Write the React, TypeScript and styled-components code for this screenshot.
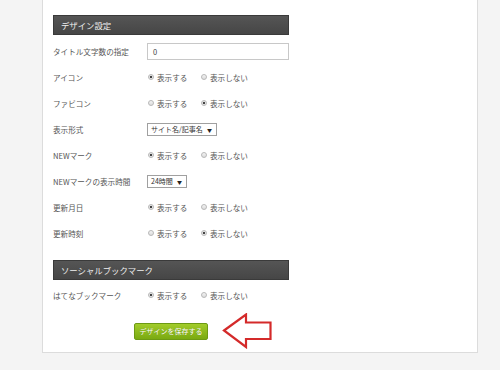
import React, { FC } from "react";
import styled, { createGlobalStyle } from "styled-components";

const GlobalStyle = createGlobalStyle`
  html, body {
    margin: 0;
    padding: 0;
    background: #f4f4f4;
    font-family: "Noto Sans CJK JP", "Liberation Sans", sans-serif;
  }
`;

const Page = styled.div`
  width: 500px;
  height: 370px;
  overflow: hidden;
  padding-left: 42px;
  box-sizing: border-box;
`;

const Panel = styled.div`
  width: 436px;
  box-sizing: border-box;
  background: #fff;
  border: 1px solid #dcdcdc;
  border-top: none;
  padding: 15px 0 3px 10px;
`;

const SectionHeader = styled.div<{ $top?: number }>`
  width: 236px;
  height: 20px;
  box-sizing: border-box;
  margin-top: ${(p) => p.$top ?? 0}px;
  background: linear-gradient(#555, #464646);
  border: 1px solid #3a3a3a;
  color: #f0f0f0;
  font-size: 8.4px;
  line-height: 18px;
  padding-left: 7px;
`;

const Rows = styled.div<{ $top?: number }>`
  margin-top: ${(p) => p.$top ?? 0}px;
  display: flex;
  flex-direction: column;
`;

const Row = styled.div`
  display: grid;
  grid-template-columns: 94px 1fr;
  align-items: center;
  height: 26px;
`;

const Label = styled.div`
  font-size: 7.6px;
  color: #555;
  white-space: nowrap;
`;

const TextInput = styled.div`
  width: 142px;
  height: 17px;
  box-sizing: border-box;
  border: 1px solid #c8c8c8;
  font-size: 7.5px;
  color: #444;
  line-height: 15px;
  padding-left: 5px;
`;

const RadioGroup = styled.div`
  display: flex;
  align-items: center;
  padding-left: 1px;
`;

const RadioItem = styled.div`
  display: flex;
  align-items: center;
  gap: 3px;
  width: 53px;
  font-size: 7.6px;
  color: #555;
  white-space: nowrap;
`;

const RadioDot = styled.span<{ $on: boolean }>`
  width: 6px;
  height: 6px;
  border-radius: 50%;
  box-sizing: border-box;
  border: 1px solid #b8b8b8;
  background: ${(p) =>
    p.$on
      ? "radial-gradient(circle, #444 0 1.3px, #eee 1.6px)"
      : "linear-gradient(#f4f4f4, #dcdcdc)"};
`;

const SelectBox = styled.div<{ $w: number }>`
  width: ${(p) => p.$w}px;
  height: 13px;
  box-sizing: border-box;
  border: 1px solid #a0a0a0;
  display: flex;
  align-items: center;
  justify-content: space-between;
  padding: 0 4px 0 3px;
  font-size: 7px;
  color: #333;
  white-space: nowrap;
`;

const Caret = styled.span`
  font-size: 5px;
  color: #222;
`;

const SaveRow = styled.div`
  display: flex;
  align-items: center;
  gap: 14px;
  padding-left: 81px;
  margin-top: 5px;
`;

const SaveButton = styled.button`
  width: 74px;
  height: 17px;
  border: 1px solid #6d9a14;
  border-radius: 2px;
  background: linear-gradient(#a2cc2a, #7aaa12);
  color: #fff;
  font-family: inherit;
  font-size: 7px;
  padding: 0;
  text-shadow: 0 0 1px rgba(0, 0, 0, 0.25);
`;

const Radio: FC<{ on: boolean }> = ({ on }) => (
  <RadioGroup>
    <RadioItem>
      <RadioDot $on={on} />
      表示する
    </RadioItem>
    <RadioItem>
      <RadioDot $on={!on} />
      表示しない
    </RadioItem>
  </RadioGroup>
);

const Arrow: FC = () => (
  <svg width="52" height="36" viewBox="0 0 52 36">
    <path
      d="M2 17.5 L24 1.5 L24 9.5 L48.5 9.5 L48.5 26 L24 26 L24 34 Z"
      fill="none"
      stroke="#d42a2a"
      strokeWidth="2.2"
      strokeLinejoin="miter"
    />
  </svg>
);

const App: FC = () => {
  return (
    <Page>
      <GlobalStyle />
      <Panel>
        <SectionHeader>デザイン設定</SectionHeader>
        <Rows $top={3}>
          <Row>
            <Label>タイトル文字数の指定</Label>
            <TextInput>0</TextInput>
          </Row>
          <Row>
            <Label>アイコン</Label>
            <Radio on={true} />
          </Row>
          <Row>
            <Label>ファビコン</Label>
            <Radio on={false} />
          </Row>
          <Row>
            <Label>表示形式</Label>
            <SelectBox $w={70}>
              サイト名/記事名 <Caret>▼</Caret>
            </SelectBox>
          </Row>
          <Row>
            <Label>NEWマーク</Label>
            <Radio on={true} />
          </Row>
          <Row>
            <Label>NEWマークの表示時間</Label>
            <SelectBox $w={40}>
              24時間 <Caret>▼</Caret>
            </SelectBox>
          </Row>
          <Row>
            <Label>更新月日</Label>
            <Radio on={true} />
          </Row>
          <Row>
            <Label>更新時刻</Label>
            <Radio on={false} />
          </Row>
        </Rows>
        <SectionHeader $top={14}>ソーシャルブックマーク</SectionHeader>
        <Rows $top={2}>
          <Row>
            <Label>はてなブックマーク</Label>
            <Radio on={true} />
          </Row>
        </Rows>
        <SaveRow>
          <SaveButton>デザインを保存する</SaveButton>
          <Arrow />
        </SaveRow>
      </Panel>
    </Page>
  );
};

export default App;
